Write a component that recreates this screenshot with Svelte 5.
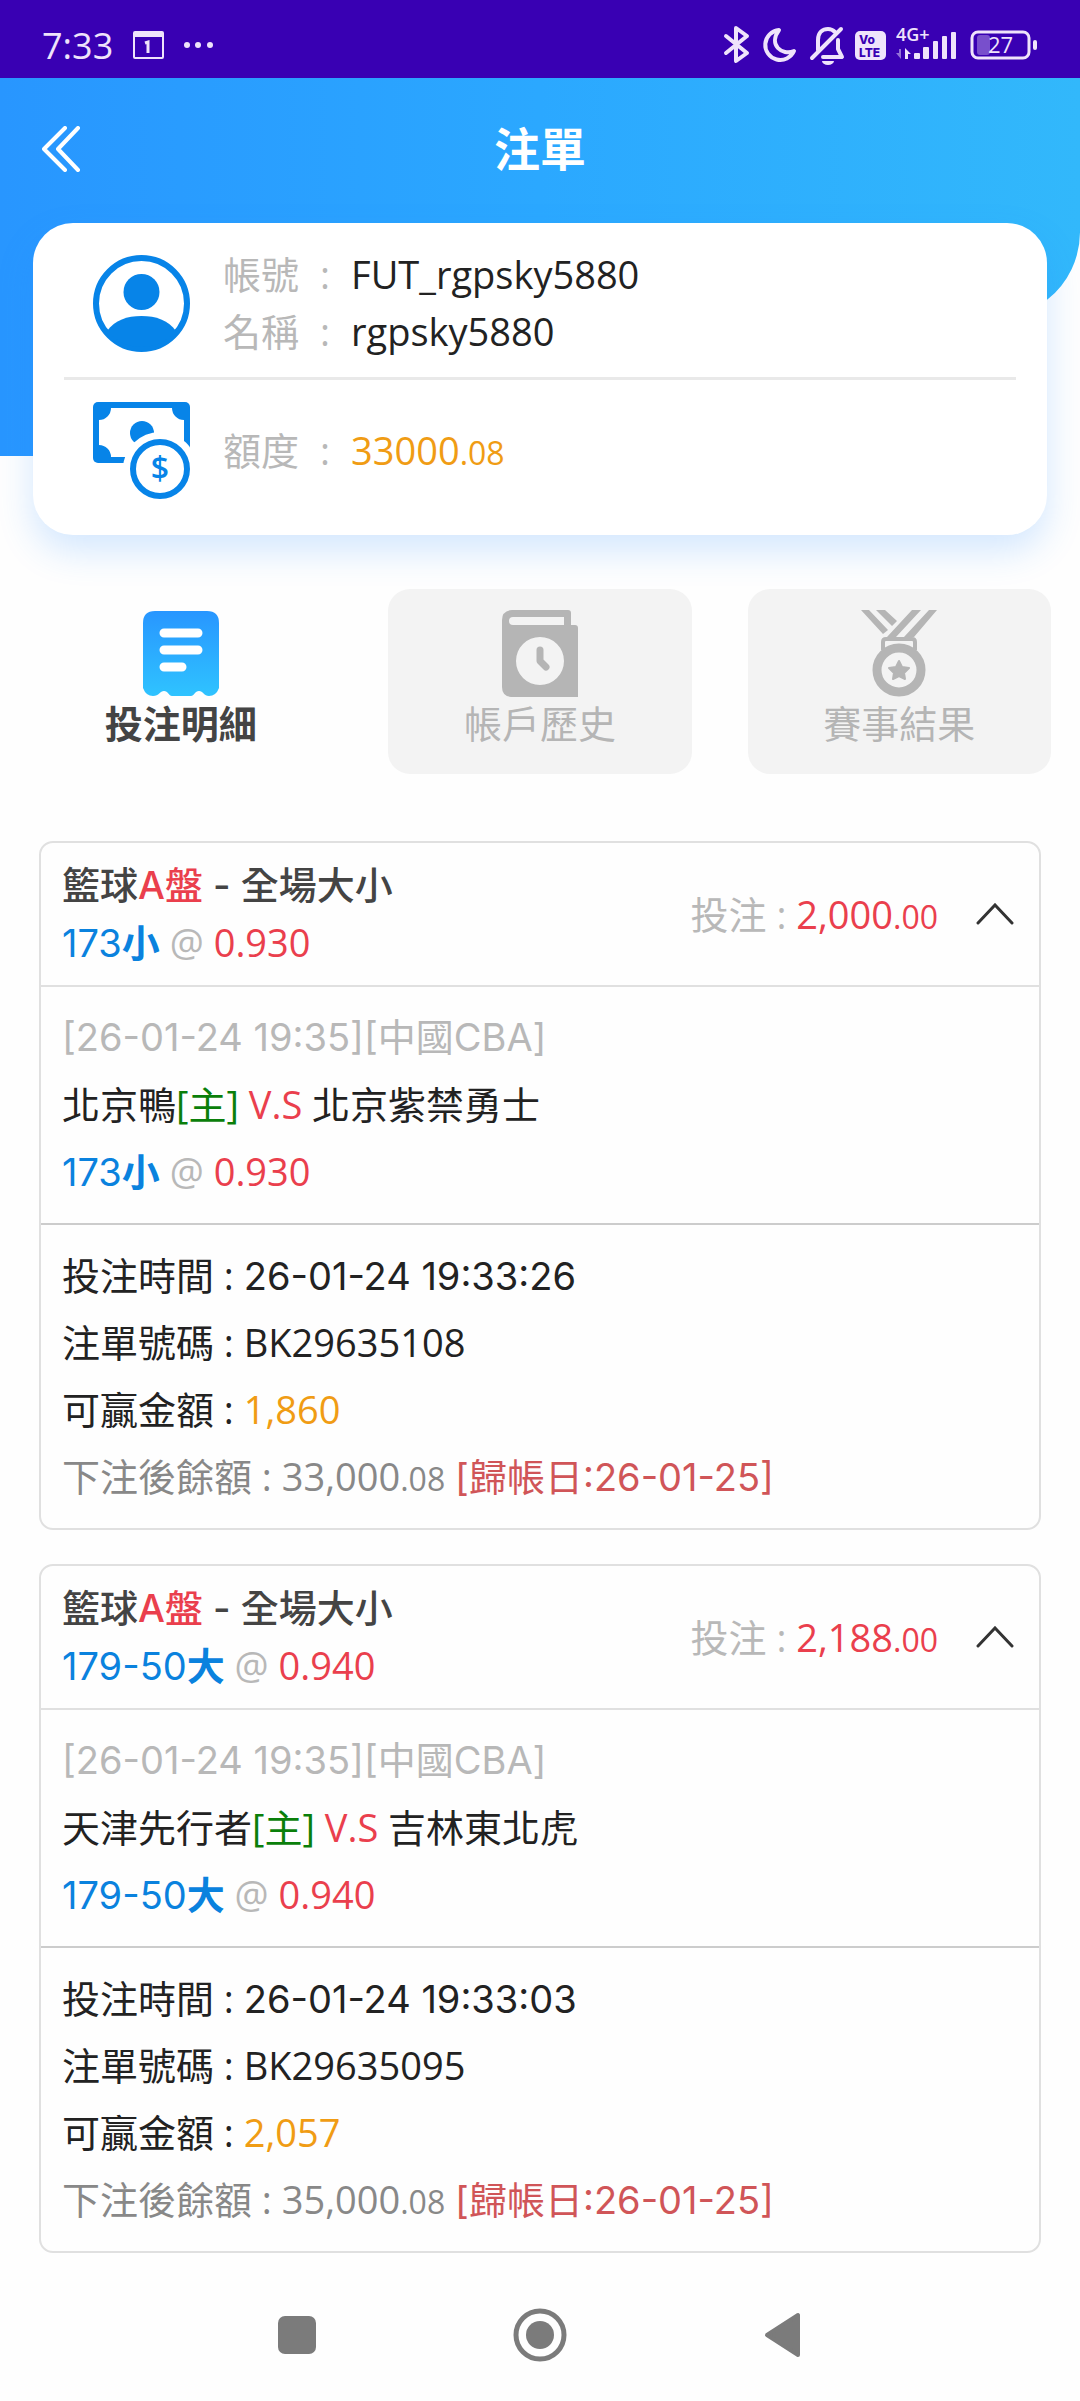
<script>
    let activeTab = $state('bets');

    const tabs = [
        { id: 'bets', label: '投注明細' },
        { id: 'history', label: '帳戶歷史' },
        { id: 'results', label: '賽事結果' }
    ];

    let bets = $state([
        {
            id: 'BK29635108',
            line: '173',
            side: '小',
            odds: '0.930',
            stake: ['2,000', '.00'],
            home: '北京鴨',
            away: '北京紫禁勇士',
            time: '26-01-24 19:33:26',
            win: '1,860',
            balance: ['33,000', '.08'],
            open: true
        },
        {
            id: 'BK29635095',
            line: '179-50',
            side: '大',
            odds: '0.940',
            stake: ['2,188', '.00'],
            home: '天津先行者',
            away: '吉林東北虎',
            time: '26-01-24 19:33:03',
            win: '2,057',
            balance: ['35,000', '.08'],
            open: true
        }
    ]);
</script>

{#snippet pick(bet)}
    <span class="blue wide">{bet.line}<b>{bet.side}</b></span> <span class="muted">@</span> <span class="red">{bet.odds}</span>
{/snippet}

<div class="status-bar">
    <div class="status-left">
        <span class="clock">7:33</span>
        <svg width="31" height="28" viewBox="0 0 31 28">
            <rect x="1" y="1" width="29" height="26" rx="1" fill="none" stroke="currentColor" stroke-width="2" />
            <path d="M1 1h29v5H1z" fill="currentColor" />
            <path d="M12 12l3-1v11" fill="none" stroke="currentColor" stroke-width="3" />
        </svg>
        <svg width="30" height="28" viewBox="0 0 30 28" fill="currentColor">
            <circle cx="3" cy="14" r="3" />
            <circle cx="14" cy="14" r="3" />
            <circle cx="26" cy="14" r="3" />
        </svg>
    </div>
    <div class="status-right">
        <svg width="30" height="50" viewBox="0 0 30 50" fill="none" stroke="currentColor" stroke-width="4" stroke-linejoin="round" stroke-linecap="round">
            <path d="M5 16L26 33L15 41V8L26 16L5 33" />
        </svg>
        <svg width="38" height="50" viewBox="0 0 38 50" fill="none" stroke="currentColor" stroke-width="4" stroke-linejoin="round">
            <path d="M19 10A15 15 0 1 0 34 31C22 36 8 25 19 10Z" />
        </svg>
        <svg width="38" height="50" viewBox="0 0 38 50" fill="none" stroke="currentColor" stroke-width="4" stroke-linecap="round" stroke-linejoin="round">
            <path d="M34 9L5 38" />
            <path d="M11 30V20C11 12 16 9 21 9C24 9 26 10 28 12" />
            <path d="M31 20V29L35 37H16" />
            <path d="M15 41H27A6 4 0 0 1 15 41Z" fill="currentColor" stroke="none" />
        </svg>
        <svg width="33" height="50" viewBox="0 0 33 50">
            <rect x="1" y="11" width="31" height="29" rx="5" fill="currentColor" />
            <text class="volte" x="5" y="24">Vo</text>
            <text class="volte" x="5" y="37">LTE</text>
        </svg>
        <svg width="61" height="50" viewBox="0 0 61 50" fill="currentColor">
            <text class="network" x="0" y="21">4G+</text>
            <path d="M5 29v10L0 33h3v-4z" opacity="0.5" />
            <path d="M9 39V28l6 6h-3v5z" />
            <rect x="18" y="33" width="6" height="6" rx="1" />
            <rect x="27" y="27" width="6" height="12" rx="1" />
            <rect x="37" y="21" width="5" height="18" rx="1" />
            <rect x="46" y="16" width="5" height="23" rx="1" />
            <rect x="55" y="12" width="5" height="27" rx="1" />
        </svg>
        <svg width="71" height="50" viewBox="0 0 71 50">
            <rect x="6" y="12" width="57" height="26" rx="6" fill="none" stroke="currentColor" stroke-width="3" />
            <rect x="11" y="15" width="13" height="20" rx="3" fill="currentColor" opacity="0.35" />
            <rect x="67" y="20" width="4" height="10" rx="2" fill="currentColor" />
            <text class="battery" x="22" y="33">27</text>
        </svg>
    </div>
</div>

<main>
    <header>
        <svg class="wave" viewBox="0 0 1080 378" preserveAspectRatio="none">
            <defs>
                <linearGradient id="sky">
                    <stop offset="0" stop-color="#2896ff" />
                    <stop offset="0.5" stop-color="#2ba8ff" />
                    <stop offset="1" stop-color="#32b8fb" />
                </linearGradient>
            </defs>
            <path d="M0 0H1080V154A86 86 0 0 1 1048 221C900 340 500 378 200 378H0Z" fill="url(#sky)" />
        </svg>

        <div class="title-bar">
            <button class="back" aria-label="返回">
                <svg width="39" height="46" viewBox="0 0 39 46" fill="none" stroke="currentColor" stroke-width="4" stroke-linecap="round" stroke-linejoin="round">
                    <path d="M23 2L2 23L23 44M36 2L16 23L36 44" />
                </svg>
            </button>
            <h1>注單</h1>
        </div>

        <section class="account">
            <div class="account-row">
                <svg width="97" height="97" viewBox="0 0 97 97" fill="#0784e8">
                    <circle cx="48.5" cy="48.5" r="45.5" fill="none" stroke="#0784e8" stroke-width="6" />
                    <circle cx="48.5" cy="37" r="18" />
                    <path d="M14 76C22 65 34 61 48.5 61S75 65 83 76A45 45 0 0 1 14 76Z" />
                </svg>
                <div>
                    <p><span class="muted">帳號</span><span class="colon">:</span>FUT_rgpsky5880</p>
                    <p><span class="muted">名稱</span><span class="colon">:</span>rgpsky5880</p>
                </div>
            </div>
            <div class="account-row">
                <svg width="97" height="97" viewBox="0 0 97 97" fill="#0784e8">
                    <rect width="97" height="61" rx="5" />
                    <path d="M18 6H79A12 12 0 0 0 91 18V43A12 12 0 0 0 79 55H18A12 12 0 0 0 6 43V18A12 12 0 0 0 18 6Z" fill="#fff" />
                    <circle cx="49" cy="31" r="12" />
                    <circle cx="67" cy="67" r="37" fill="#fff" />
                    <circle cx="67" cy="67" r="27" fill="none" stroke="#0784e8" stroke-width="6" />
                    <text class="dollar" x="67" y="78" text-anchor="middle">$</text>
                </svg>
                <p><span class="muted">額度</span><span class="colon">:</span><span class="amber">33000<small>.08</small></span></p>
            </div>
        </section>
    </header>

    <nav class="tabs">
        {#each tabs as tab}
            <button class="tab" class:active={activeTab === tab.id} onclick={() => (activeTab = tab.id)}>
                {#if tab.id === 'bets'}
                    <svg width="76" height="87" viewBox="0 0 76 87">
                        <defs>
                            <linearGradient id="receipt" x2="0" y2="1">
                                <stop offset="0" stop-color="#2896ff" />
                                <stop offset="1" stop-color="#2fc3ff" />
                            </linearGradient>
                        </defs>
                        <path d="M12 1H64Q76 1 76 13V78Q73 86 66 86C61 86 60 81 56 81S51 86 48 86H29C26 86 25 81 21 81S16 86 10 86Q3 86 0 78V13Q0 1 12 1Z" fill="url(#receipt)" />
                        <path d="M21 23H55M21 40H55M21 57H39" stroke="#fff" stroke-width="9" stroke-linecap="round" />
                    </svg>
                {:else if tab.id === 'history'}
                    <svg width="76" height="87" viewBox="0 0 76 87">
                        <path fill-rule="evenodd" d="M10 0H66Q69 0 69 3V15H73Q76 15 76 18V87H9Q0 86 0 77V10Q0 1 10 0ZM11 7Q7 7 7 11T11 15H62V7ZM38 27A24 24 0 1 0 38 75A24 24 0 1 0 38 27Z" fill="#b5b5b5" />
                        <path d="M38 40V51L44 57" fill="none" stroke="#b5b5b5" stroke-width="7" stroke-linecap="round" stroke-linejoin="round" />
                    </svg>
                {:else}
                    <svg width="76" height="87" viewBox="0 0 76 87" fill="#b5b5b5">
                        <path d="M0 0H8L27 20L22 24ZM15 0H24L36 11L31 16ZM51 0H60L35 27H26ZM68 0H76L53 27H43Z" />
                        <path d="M22 40V32Q22 29 25 29H51Q54 29 54 32V40" fill="none" stroke="#b5b5b5" stroke-width="4" />
                        <circle cx="38" cy="60" r="22" fill="none" stroke="#b5b5b5" stroke-width="9" />
                        <path d="M38 51L41 57L48 58L43 63L44 69L38 66L32 69L33 63L28 58L35 57Z" stroke="#b5b5b5" stroke-width="2" stroke-linejoin="round" />
                    </svg>
                {/if}
                <span>{tab.label}</span>
            </button>
        {/each}
    </nav>

    <div class="bets">
        {#each bets as bet (bet.id)}
            <article class="bet">
                <button class="bet-head" aria-expanded={bet.open} onclick={() => (bet.open = !bet.open)}>
                    <span class="bet-title">
                        <span class="game wide">籃球<span class="red">A盤</span> - 全場大小</span>
                        <span>{@render pick(bet)}</span>
                    </span>
                    <span class="stake">
                        <span class="muted">投注 :</span>
                        <span class="red">{bet.stake[0]}<small>{bet.stake[1]}</small></span>
                    </span>
                    <svg class="chevron" class:closed={!bet.open} width="38" height="22" viewBox="0 0 38 22" fill="none" stroke="#333" stroke-width="3" stroke-linecap="round">
                        <path d="M2 20L19 2L36 20" />
                    </svg>
                </button>
                {#if bet.open}
                    <div class="rows match">
                        <p class="muted wide">[26-01-24 19:35][中國CBA]</p>
                        <p>{bet.home}<span class="green">[主]</span> <span class="red">V.S</span> {bet.away}</p>
                        <p>{@render pick(bet)}</p>
                    </div>
                    <div class="rows">
                        <p>投注時間 : <span class="wide">{bet.time}</span></p>
                        <p>注單號碼 : {bet.id}</p>
                        <p>可贏金額 : <span class="amber">{bet.win}</span></p>
                        <p class="after">下注後餘額 : {bet.balance[0]}<small>{bet.balance[1]}</small> <span class="settle wide">[歸帳日:26-01-25]</span></p>
                    </div>
                {/if}
            </article>
        {/each}
    </div>
</main>

<div class="system-nav">
    <button aria-label="最近">
        <svg width="54" height="54" viewBox="0 0 54 54" fill="currentColor">
            <rect x="8" y="8" width="38" height="38" rx="7" />
        </svg>
    </button>
    <button aria-label="主畫面">
        <svg width="54" height="54" viewBox="0 0 54 54" fill="currentColor">
            <circle cx="27" cy="27" r="24" fill="none" stroke="currentColor" stroke-width="5" />
            <circle cx="27" cy="27" r="14" />
        </svg>
    </button>
    <button aria-label="上一頁">
        <svg width="54" height="54" viewBox="0 0 54 54" fill="currentColor" stroke="currentColor" stroke-width="4" stroke-linejoin="round">
            <path d="M11 27L42 7V47Z" />
        </svg>
    </button>
</div>

<style>
    :global(body) {
        background: #fefefe;
        color: #222;
        font-family: 'Open Sans', 'Noto Sans CJK TC', sans-serif;
        font-size: 38px;
        line-height: 57px;
    }

    button {
        margin: 0;
        padding: 0;
        border: none;
        background: none;
        color: inherit;
        font: inherit;
        cursor: pointer;
    }

    svg {
        display: block;
        flex: none;
    }

    p, h1 {
        margin: 0;
    }

    small {
        font-size: 32px;
        line-height: 1;
    }

    /* dates and handicaps read better with the wider hyphen */
    .wide {
        font-family: Inter, 'Noto Sans CJK TC', sans-serif;
        line-height: 1;
    }

    .red {
        color: #ea3f4d;
    }

    .blue {
        color: #0a82de;
    }

    .muted {
        color: #b8b8b8;
    }

    .green {
        color: #0a7f0a;
    }

    .amber {
        color: #f09c14;
    }

    /* --- status bar --- */
    .status-bar {
        display: flex;
        justify-content: space-between;
        align-items: center;
        height: 78px;
        padding: 12px 43px 0 42px;
        box-sizing: border-box;
        background: #3900b3;
        color: #efe3fb;
    }

    .status-left,
    .status-right {
        display: flex;
        align-items: center;
    }

    .status-left {
        gap: 20px;
    }

    .status-right {
        gap: 9px;
    }

    .clock {
        font-size: 36px;
    }

    .volte {
        font-family: Inter, sans-serif;
        font-size: 12px;
        font-weight: 800;
        fill: #3900b3;
    }

    .network {
        font-size: 18px;
        font-weight: 600;
    }

    .battery {
        font-size: 22px;
        fill: currentColor;
    }

    /* --- header --- */
    header {
        position: relative;
    }

    .wave {
        position: absolute;
        top: 0;
        left: 0;
        width: 100%;
        height: 378px;
    }

    .title-bar {
        position: relative;
        display: grid;
        grid-template-columns: 1fr auto 1fr;
        align-items: center;
        height: 145px;
        padding: 0 42px 4px;
        box-sizing: border-box;
        color: #fff;
    }

    .back {
        justify-self: start;
    }

    h1 {
        font-size: 46px;
        font-weight: 700;
    }

    .account {
        position: relative;
        margin: 0 33px;
        padding: 0 31px;
        border-radius: 40px;
        background: #fff;
        box-shadow: 0 16px 36px rgba(40, 140, 255, 0.2);
    }

    .account-row {
        display: flex;
        align-items: center;
        gap: 33px;
        padding: 22px 29px 36px;
    }

    .account-row:first-child {
        padding: 23px 29px 17px;
        border-bottom: 3px solid #e9e9e9;
    }

    .colon {
        display: inline-block;
        width: 52px;
        text-align: center;
        color: #b8b8b8;
    }

    .dollar {
        font-size: 32px;
        font-weight: 600;
    }

    /* --- tabs --- */
    .tabs {
        display: grid;
        grid-template-columns: repeat(3, 1fr);
        gap: 56px;
        padding: 54px 29px 67px;
    }

    .tab {
        display: flex;
        flex-direction: column;
        align-items: center;
        padding: 21px 0 24px;
        border-radius: 22px;
        background: #f3f3f3;
        color: #b5b5b5;
        line-height: 53px;
    }

    .tab.active {
        background: none;
        color: #444;
        font-weight: 700;
    }

    /* --- bet list --- */
    .bets {
        display: flex;
        flex-direction: column;
        gap: 34px;
        padding: 0 39px;
    }

    .bet {
        border: 2px solid #e0e0e0;
        border-radius: 14px;
    }

    .bet-head {
        display: flex;
        align-items: center;
        width: 100%;
        padding: 14px 25px 14px 21px;
        text-align: left;
    }

    .bet-title {
        flex: 1;
        display: flex;
        flex-direction: column;
    }

    .game {
        color: #444;
        font-weight: 500;
        line-height: 57px;
    }

    .stake {
        margin-right: 38px;
    }

    .chevron.closed {
        transform: rotate(180deg);
    }

    .rows {
        padding: 17px 21px 18px;
        border-top: 2px solid #ccc;
        line-height: 67px;
    }

    .rows p {
        line-height: 67px;
    }

    .match {
        border-top-color: #e0e0e0;
    }

    .after {
        color: #888;
    }

    .settle {
        color: #d05558;
    }

    /* --- system navigation --- */
    .system-nav {
        display: flex;
        justify-content: center;
        gap: 189px;
        padding: 55px 0 39px;
        color: #7b7b7b;
    }
</style>
